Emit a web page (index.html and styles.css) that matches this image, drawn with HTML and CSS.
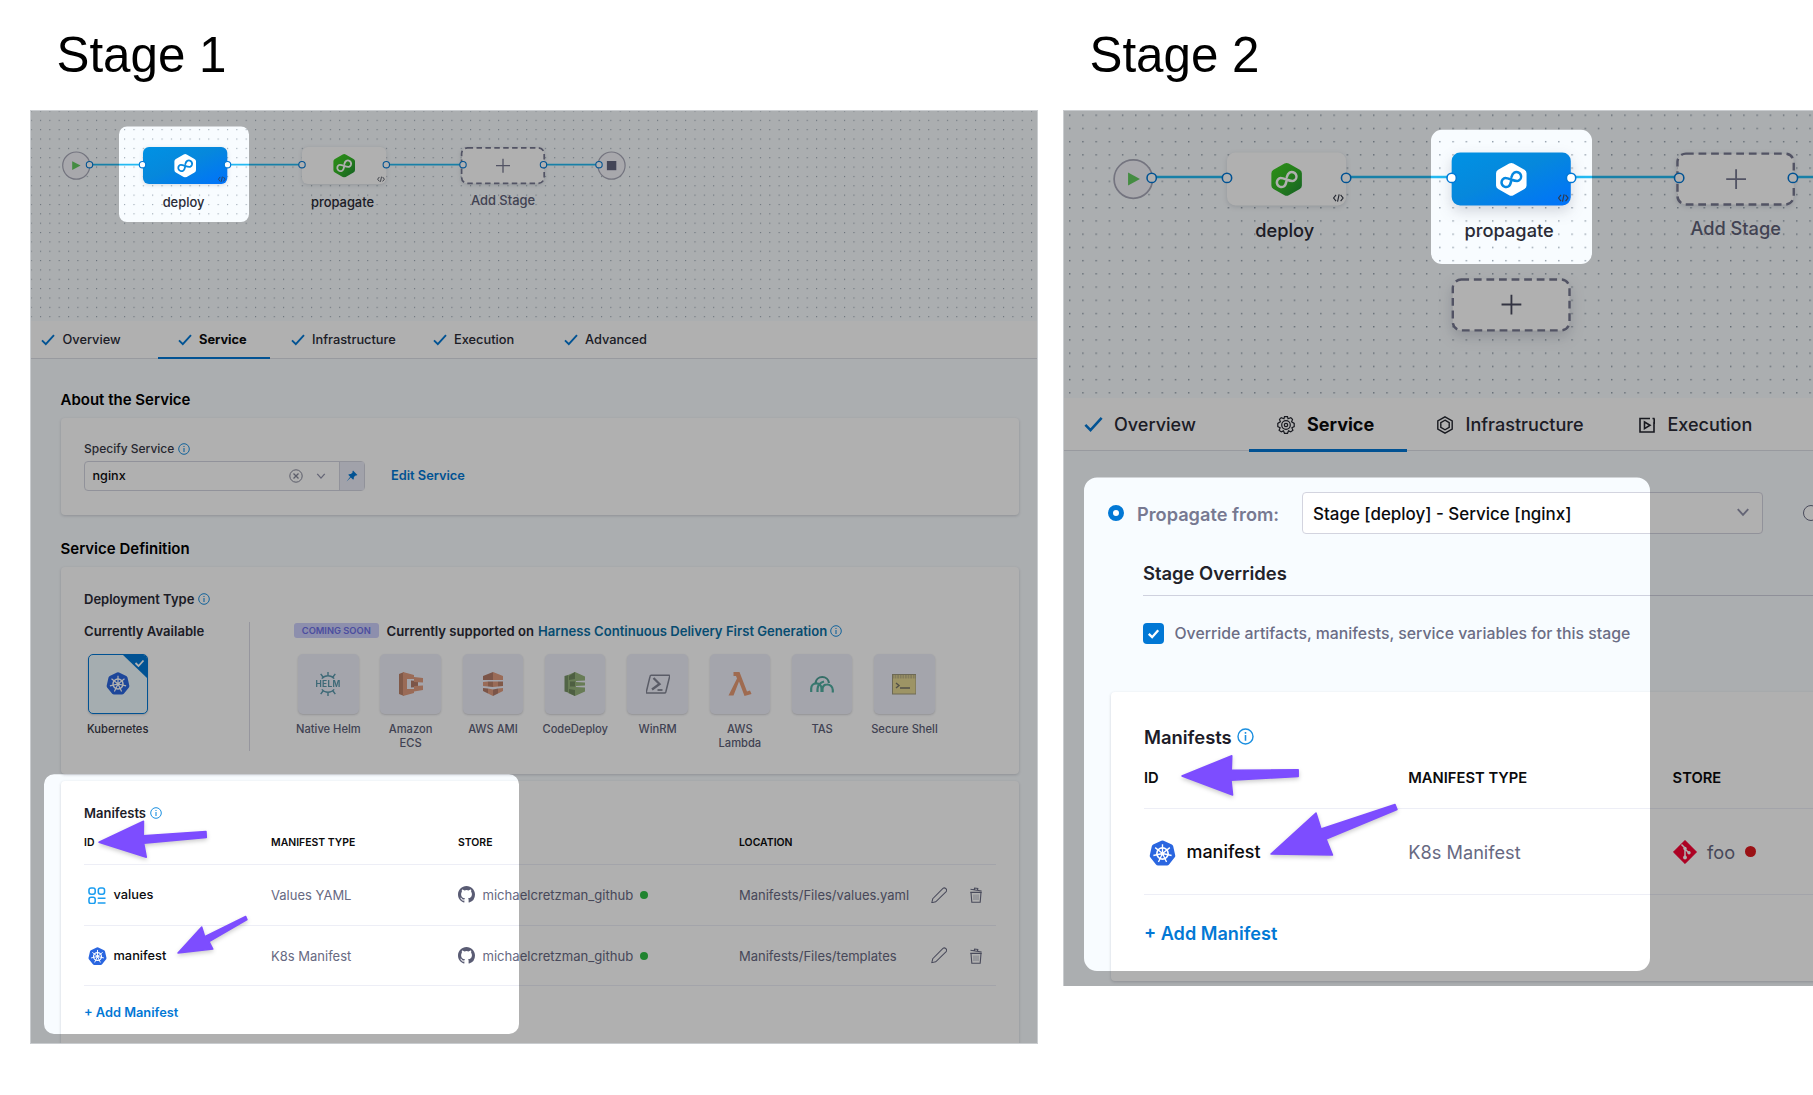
FILE: index.html
```
<!DOCTYPE html>
<html lang="en">
<head>
<meta charset="utf-8">
<title>Propagate a service between stages</title>
<link rel="stylesheet" href="styles.css">
</head>
<body>
<svg class="defs" width="0" height="0" aria-hidden="true">
  <defs>
    <linearGradient id="blue" x1="0" y1="0" x2="1" y2="1"><stop offset="0" stop-color="#0092e4"/><stop offset=".45" stop-color="#0688dc"/><stop offset="1" stop-color="#0072fb"/></linearGradient>
    <linearGradient id="green" x1="0" y1="0" x2="1" y2="1"><stop offset="0" stop-color="#42d022"/><stop offset=".5" stop-color="#35b828"/><stop offset="1" stop-color="#1f8a35"/></linearGradient>
    <pattern id="dots1" patternUnits="userSpaceOnUse" x="30.6" y="119.8" width="9.35" height="9.35"><rect width="1.1" height="1.1" fill="#96a3af"/></pattern>
    <pattern id="dots2" patternUnits="userSpaceOnUse" x="1069" y="114.5" width="13.22" height="13.22"><rect width="1.4" height="1.4" fill="#8f9ca8"/></pattern>
    <symbol id="hex" viewBox="-12 -12 24 24"><path d="M-1.5-11.2Q0-12 1.5-11.2L9.3-6.8Q10.8-6 10.8-4.4V4.4Q10.8 6 9.3 6.8L1.5 11.2Q0 12-1.5 11.2L-9.3 6.8Q-10.8 6-10.8 4.4V-4.4Q-10.8-6-9.3-6.8z"/><path d="M-.9 1.3C-2.2 2.9-3 3.5-4.2 3.5a3.3 3.3 0 0 1 0-6.6C-1.6-3.100 1.300 3.300 4.100 3.300a3.300 3.300 0 0 0 0-6.600C2.800-3.300 2-2.600.9-1.400" transform="rotate(-28)" fill="none" stroke="var(--loop)" stroke-width="1.8" stroke-linecap="round"/></symbol>
    <symbol id="code" viewBox="0 0 10 8"><path d="M3 1.2.8 4 3 6.8M7 1.2 9.2 4 7 6.8M5.7.8 4.3 7.2" fill="none" stroke="#333846" stroke-width="1"/></symbol>
    <symbol id="check" viewBox="0 0 14 14"><path d="M1 7.3 4.8 11.1 13 2.1" fill="none" stroke="#0278d5" stroke-width="1.9"/></symbol>
    <symbol id="info" viewBox="0 0 12 12"><circle cx="6" cy="6" r="5.3" fill="none" stroke="#1b8fe0" stroke-width="1"/><path d="M6 5v4M6 2.9v1.2" stroke="#1b8fe0" stroke-width="1.1"/></symbol>
    <symbol id="k8s" viewBox="-12 -12 24 24"><path d="M-1-11.4Q0-11.9 1-11.4L8.3-7.9Q9.2-7.4 9.5-6.4L11.3 1.5Q11.5 2.6 10.9 3.4L5.8 9.8Q5.1 10.6 4 10.6H-4Q-5.1 10.6-5.8 9.8L-10.9 3.4Q-11.5 2.6-11.3 1.5L-9.5-6.4Q-9.2-7.4-8.3-7.9z" fill="#2a66e0"/><g fill="none" stroke="#fff"><circle r="5" stroke-width="1.5"/><g stroke-width="1.2"><path d="M0-8.3V0L6.5-5.2M0 0 8.1 1.8M0 0 3.6 7.5M0 0-3.6 7.5M0 0-8.1 1.8M0 0-6.5-5.2"/></g></g><circle r="1.5" fill="#fff"/></symbol>
    <symbol id="github" viewBox="0 0 16 16"><path fill="#5a5c74" d="M8 0C3.58 0 0 3.58 0 8c0 3.54 2.29 6.53 5.47 7.59.4.07.55-.17.55-.38 0-.19-.01-.82-.01-1.49-2.01.37-2.53-.49-2.69-.94-.09-.23-.48-.94-.82-1.13-.28-.15-.68-.52-.01-.53.63-.01 1.08.58 1.23.82.72 1.21 1.87.87 2.33.66.07-.52.28-.87.51-1.07-1.78-.2-3.64-.89-3.64-3.95 0-.87.31-1.59.82-2.15-.08-.2-.36-1.02.08-2.12 0 0 .67-.21 2.2.82a7.5 7.5 0 0 1 4 0c1.53-1.04 2.2-.82 2.2-.82.44 1.1.16 1.92.08 2.12.51.56.82 1.27.82 2.15 0 3.07-1.87 3.75-3.65 3.95.29.25.54.73.54 1.48 0 1.07-.01 1.93-.01 2.2 0 .21.15.46.55.38A8.01 8.01 0 0 0 16 8c0-4.42-3.58-8-8-8z"/></symbol>
    <symbol id="pencil" viewBox="0 0 16 16"><path d="M.8 15.2 1.7 11.4 11.6 1.3Q13 .2 14.4 1.6 15.8 3 14.7 4.4L4.6 14.3Z" fill="none" stroke="#6b6d85" stroke-width="1"/></symbol>
    <symbol id="trash" viewBox="0 0 14 16"><path d="M1.5 2.2 12.6 4M5.2 2.6 5.6 1 8.8 1.5 8.6 3M2 5.4H12L11.2 15.2H2.8zM1.2 5.4H12.8" fill="none" stroke="#6b6d85" stroke-width="1.1"/><path d="M5 7.5v5.5M7 7.5v5.5M9 7.5v5.5" stroke="#a3a6b8" stroke-width=".8"/></symbol>
    <symbol id="chev" viewBox="0 0 12 12"><path d="M1.5 3.5 6 8.5 10.5 3.5" fill="none" stroke="#9293ab" stroke-width="1.6"/></symbol>
  </defs>
</svg>

<main class="stages">
  <section class="stage stage-one">
    <h1>Stage 1</h1>
    <div class="panel">
      <svg class="canvas" viewBox="31 111 1006 210" width="1006" height="210">
        <rect x="31" y="111" width="1006" height="210" fill="url(#dots1)"/>
        <g transform="translate(143 147)">
          <path class="link" d="M-53 17.7H0M84 17.7H159M243 17.7H320M400 17.7H456"/>
          <circle class="terminal" cx="-66.7" cy="18.6" r="13.6"/><path d="M-70.8 14.2 -62.4 18.6-70.8 23z" fill="#63cb5f"/>
          <circle class="terminal" cx="468.5" cy="18.6" r="13.6"/><rect x="463.9" y="14" width="9.4" height="9.2" fill="#62647e"/>
          <rect class="node selected" width="84.3" height="37" rx="6"/>
          <use class="hex-white" href="#hex" x="30.2" y="6.7" width="24" height="24"/><use href="#code" x="74.8" y="29" width="8" height="6.4"/>
          <rect class="node" x="159" width="84.3" height="37" rx="6"/>
          <use class="hex-green" href="#hex" x="189.2" y="6.7" width="24" height="24"/><use href="#code" x="234" y="29" width="8" height="6.4"/>
          <rect class="node add" x="318.6" y=".8" width="82.6" height="35.6" rx="6"/><path class="plus" d="M353 18.7H367M360 11.7V25.7"/>
          <g class="port"><circle cx="-53.5" cy="17.7" r="3.2"/><circle cx="-.5" cy="17.7" r="3.2"/><circle cx="84.5" cy="17.7" r="3.2"/><circle cx="159" cy="17.7" r="3.2"/><circle cx="243.3" cy="17.7" r="3.2"/><circle cx="320" cy="17.7" r="3.2"/><circle cx="400.5" cy="17.7" r="3.2"/><circle cx="456" cy="17.7" r="3.2"/></g>
          <text x="40.5" y="59.6">deploy</text><text x="199.5" y="59.6">propagate</text><text class="muted" x="360" y="57.7">Add Stage</text>
        </g>
      </svg>
      <nav class="tabs">
        <a><svg><use href="#check"/></svg>Overview</a>
        <a class="active"><svg><use href="#check"/></svg>Service</a>
        <a><svg><use href="#check"/></svg>Infrastructure</a>
        <a><svg><use href="#check"/></svg>Execution</a>
        <a><svg><use href="#check"/></svg>Advanced</a>
      </nav>
      <div class="body">
        <h2>About the Service</h2>
        <div class="card about">
          <div class="label">Specify Service <svg class="info"><use href="#info"/></svg></div>
          <div class="field-row">
            <div class="select">
              <span>nginx</span>
              <svg class="clear" viewBox="0 0 14 14"><circle cx="7" cy="7" r="6.2" fill="none" stroke="#85879a"/><path d="M4.5 4.5 9.5 9.5M9.5 4.5 4.5 9.5" stroke="#85879a" stroke-width="1.3"/></svg>
              <svg class="chev"><use href="#chev"/></svg>
              <span class="pin"><svg viewBox="0 0 12 12"><path d="M7 .6 11.4 5 10.2 5.6 9.6 5.4 7.9 7.1Q8.2 8.6 7.2 9.8L4.8 7.4.6 11.4 4.2 6.8 2.2 4.8Q3.4 3.8 4.9 4.1L6.6 2.4 6.4 1.8z" fill="#0278d5"/></svg></span>
            </div>
            <a class="link-text">Edit Service</a>
          </div>
        </div>
        <h2 class="second">Service Definition</h2>
        <div class="card definition">
          <div class="label strong">Deployment Type <svg class="info"><use href="#info"/></svg></div>
          <div class="types">
            <div class="available">
              <h3>Currently Available</h3>
              <div class="type"><div class="tile chosen"><svg viewBox="0 0 24 24"><use href="#k8s" width="24" height="24"/></svg><svg class="corner" viewBox="0 0 24 23"><path d="M0 0H24V23z" fill="#0278d5"/><path d="M12.5 8 15.5 11 20.5 5.5" fill="none" stroke="#fff" stroke-width="1.8"/></svg></div><span>Kubernetes</span></div>
            </div>
            <div class="upcoming">
              <h3><span class="badge">COMING SOON</span>Currently supported on <a>Harness Continuous Delivery First Generation</a><svg class="info"><use href="#info"/></svg></h3>
              <div class="tiles">
                <div class="type"><div class="tile"><svg viewBox="-12 -12 24 24"><g fill="none" stroke="#3a879c" stroke-width="1.4"><path d="M-6.2-5.400A8.200 8.200 0 0 1 6.200-5.400M-6.200 5.400A8.200 8.200 0 0 0 6.200 5.400M0-8.200V-12M0 8.200V12M-5-7-7.300-10.200M5-7 7.300-10.200M-5 7-7.300 10.200M5 7 7.300 10.200"/></g><text class="helm" x="0" y="2.9">HELM</text></svg></div><span>Native Helm</span></div>
                <div class="type"><div class="tile"><svg viewBox="0 0 24 24"><path d="M0 2 5 0V24L0 22z" fill="#b0694a"/><path d="M4 0 15 3V7H8V17H15V21L4 24z" fill="#dc8a63"/><path d="M12 8.500 19 9V15L12 15.500z" fill="#a8644a"/><path d="M15 5 24 6V10.500L15 10zM15 14 24 13.500V18L15 19.500z" fill="#dc8a63"/></svg></div><span>Amazon ECS</span></div>
                <div class="type"><div class="tile"><svg viewBox="0 0 24 24"><path d="M2 4 12 0V8L2 8z" fill="#a8644a"/><path d="M22 4 12 0V8L22 8zM2 10 7 9.500V14.500L2 14z" fill="#dc8a63"/><path d="M7 9.500H12V15L7 14.500zM17 9.500H22V14L17 14.500z" fill="#b0694a"/><path d="M12 9.500H17V14.500L12 15zM7 16.500 12 17.500V24L7 21.500zM17 16.500 22 16V19L17 21.500z" fill="#dc8a63"/><path d="M2 16 7 16.500V21.500L2 19zM12 17.500 17 16.500V21.500L12 24z" fill="#a8644a"/></svg></div><span>AWS AMI</span></div>
                <div class="type"><div class="tile"><svg viewBox="0 0 24 24"><path d="M1.500 4 5 3V20.500L1.500 19.500z" fill="#5f8048"/><path d="M5 3 12 0 22 4.500V8.500L13 9V10L22 10.500V13.500L13 14V15L22 15.500V19.500L12 24 5 21z" fill="#84a862"/><path d="M6 4 12 0V7L6 8zM7 9.500H12V14.500H7zM6 17 12 18V24L6 21z" fill="#56743f"/></svg></div><span>CodeDeploy</span></div>
                <div class="type"><div class="tile"><svg viewBox="0 0 24 24"><path d="M5.200 3.200H23Q24 3.200 23.700 4.300L19.800 20Q19.500 21 18.500 21H1Q0 21 .3 20L4.100 4.200Q4.300 3.200 5.200 3.200z" fill="none" stroke="#6c707f" stroke-width="1.500"/><path d="M7.500 6 13.500 12 6 17.500" fill="none" stroke="#6c707f" stroke-width="2.300"/><path d="M11.500 18H16.500" stroke="#6c707f" stroke-width="1.800"/></svg></div><span>WinRM</span></div>
                <div class="type"><div class="tile"><svg viewBox="0 0 24 24"><path d="M5.500 0H11.500L19 19.500 22 18.500 23.500 22 16.500 24 11 9.500 5.500 23.500H.5L9 6.500 8 4H5.500z" fill="#e58a58"/></svg></div><span>AWS Lambda</span></div>
                <div class="type"><div class="tile"><svg viewBox="0 0 24 24"><g fill="none" stroke="#2fa08e" stroke-width="2.200"><path d="M1.200 20V16.500A5 5 0 0 1 11.500 16.500V20M7.500 20V17Q8 11 14 9.500M12.500 20V17Q13 12.500 17 12.500A5.500 5.500 0 0 1 22.800 18V20.500"/><path d="M5.500 11A6.800 6.800 0 0 1 19 11" stroke="#2a8f80"/></g></svg></div><span>TAS</span></div>
                <div class="type"><div class="tile"><svg viewBox="0 0 24 24"><rect x=".5" y="2.500" width="23.500" height="19.500" fill="#e3d27d" stroke="#8e8761"/><path d="M0 4.500H24" stroke="#8e8761" stroke-width="4" stroke-dasharray="1.800 .8" opacity=".55"/><path d="M4 11 7 13.500 4 16M8 16H18" fill="none" stroke="#5d5a4a" stroke-width="1.400"/></svg></div><span>Secure Shell</span></div>
              </div>
            </div>
          </div>
        </div>
        <div class="card manifests">
          <div class="label title">Manifests <svg class="info"><use href="#info"/></svg></div>
          <div class="row head"><span>ID</span><span>MANIFEST TYPE</span><span>STORE</span><span>LOCATION</span></div>
          <div class="row"><span class="id"><svg viewBox="0 0 18 18"><g fill="none" stroke="#1a9df0" stroke-width="1.600"><rect x="1" y="1" width="6.400" height="6.400" rx="2.200"/><rect x="10.600" y="1" width="6.400" height="6.400" rx="2.200"/><rect x="1" y="10.600" width="6.400" height="6.400" rx="2.200"/><path d="M10 11.500H18M10 16.500H18"/></g></svg>values</span><span>Values YAML</span><span class="store"><svg><use href="#github"/></svg>michaelcretzman_github<i class="status ok"></i></span><span>Manifests/Files/values.yaml</span><svg class="pencil"><use href="#pencil"/></svg><svg class="trash"><use href="#trash"/></svg></div>
          <div class="row"><span class="id"><svg class="wheel"><use href="#k8s"/></svg>manifest</span><span>K8s Manifest</span><span class="store"><svg><use href="#github"/></svg>michaelcretzman_github<i class="status ok"></i></span><span>Manifests/Files/templates</span><svg class="pencil"><use href="#pencil"/></svg><svg class="trash"><use href="#trash"/></svg></div>
          <a class="link-text add-link">+ Add Manifest</a>
        </div>
      </div>
      <svg class="spotlight" viewBox="31 111 1006 932">
        <path class="dim" d="M31 111H1037V1043H31zM127 126.500H241A8 8 0 0 1 249 134.500V214A8 8 0 0 1 241 222H127A8 8 0 0 1 119 214V134.500A8 8 0 0 1 127 126.500zM54 774.300H509A10 10 0 0 1 519 784.300V1024A10 10 0 0 1 509 1034H54A10 10 0 0 1 44 1024V784.300A10 10 0 0 1 54 774.300z"/>
        <path class="arrow" d="M99 842.300 143.500 821.300 143.300 835.700 206 831.500 206.300 837.500 143.700 843.300 146.300 857.200z"/>
        <path class="arrow" d="M178 953 201.700 927 204.700 936.700 245.700 916.500 247 919.700 209 941.700 212.800 949z"/>
      </svg>
    </div>
  </section>

  <section class="stage stage-two">
    <h1>Stage 2</h1>
    <div class="panel">
      <svg class="canvas" viewBox="1064 111 760 287" width="760" height="287">
        <rect x="1064" y="111" width="760" height="287" fill="url(#dots2)"/>
        <g transform="translate(1227 152.500) scale(1.413)">
          <path class="link" d="M-53 17.300H0M84 17.300H159M243 17.300H320M400 17.300H456"/>
          <circle class="terminal" cx="-66.300" cy="18.800" r="13.600"/><path d="M-70 14.200-61.600 18.800-70 23.400z" fill="#63cb5f"/>
          <rect class="node" width="84.300" height="37.500" rx="6"/>
          <use class="hex-green" href="#hex" x="30.200" y="7" width="24" height="24"/><use href="#code" x="74.800" y="29" width="8" height="6.400"/>
          <rect class="node selected big" x="159" width="84.300" height="37.500" rx="6"/>
          <use class="hex-white" href="#hex" x="189.200" y="7" width="24" height="24"/><use href="#code" x="234" y="29" width="8" height="6.400"/>
          <rect class="node add" x="318.800" y=".8" width="82.300" height="36" rx="6"/><path class="plus" d="M353.300 18.900H367.300M360.300 11.900V25.900"/>
          <rect class="node add big" x="159.800" y="89.900" width="82.600" height="36" rx="6"/><path class="plus strong" d="M194.300 107.600H208.300M201.300 100.600V114.600"/>
          <g class="port"><circle cx="-53.300" cy="18" r="3.300"/><circle cx="0" cy="18" r="3.300"/><circle cx="84.300" cy="18" r="3.300"/><circle cx="159" cy="18" r="3.300"/><circle cx="243.500" cy="18" r="3.300"/><circle cx="320" cy="18" r="3.300"/><circle cx="400.500" cy="18" r="3.300"/></g>
          <text x="40.800" y="60">deploy</text><text x="199.700" y="60">propagate</text><text class="muted" x="360" y="58.400">Add Stage</text>
        </g>
      </svg>
      <nav class="tabs">
        <a><svg><use href="#check"/></svg>Overview</a>
        <a class="active"><svg viewBox="-9 -9 18 18"><g fill="none" stroke="#23252e" stroke-width="1.200"><path d="M-1.500-8.300H1.500L2-6.300 4.800-7.400 6.500-5.600 5.600-3.300 8.200-1.600V1.600L5.900 2.700 6.900 5.300 4.700 6.900 2.500 5.900 1.500 8.300H-1.500L-2.500 5.900-4.700 6.900-6.900 5.300-5.900 2.700-8.200 1.600V-1.600L-5.600-3.300-6.500-5.600-4.800-7.400-2-6.300z"/><circle r="4.300"/><circle r="1.700"/></g></svg>Service</a>
        <a><svg viewBox="-9 -9 18 18"><g fill="none" stroke="#23252e" stroke-width="1.400"><path d="M0-8.200 7.200-4.200V4.200L0 8.200-7.200 4.200V-4.200z"/><path d="M0-4.800 4.200-2.400V2.400L0 4.800-4.200 2.400V-2.400z"/></g></svg>Infrastructure</a>
        <a><svg viewBox="0 0 18 18"><g fill="none" stroke="#23252e" stroke-width="1.600"><path d="M16 6V16H2V2.500H12M14.500 2.500H16.500M16.200 8V2.500"/><path d="M6.500 6 12 9.300 6.500 12.600z"/></g></svg>Execution</a>
      </nav>
      <div class="body">
        <div class="source-row"><i class="radio on"></i><span class="source-label">Propagate from:</span><div class="select"><span>Stage [deploy] - Service [nginx]</span><svg class="chev"><use href="#chev"/></svg></div><i class="radio"></i></div>
        <h3 class="overrides">Stage Overrides</h3>
        <div class="override-check"><i class="checkbox"><svg viewBox="0 0 20 20"><path d="M5.500 10.300 8.700 13.500 14.500 6.800" fill="none" stroke="#fff" stroke-width="2.200"/></svg></i><span>Override artifacts, manifests, service variables for this stage</span></div>
        <div class="card manifests">
          <div class="label title">Manifests <svg class="info"><use href="#info"/></svg></div>
          <div class="row head"><span>ID</span><span>MANIFEST TYPE</span><span>STORE</span></div>
          <div class="row"><span class="id"><svg class="wheel"><use href="#k8s"/></svg>manifest</span><span>K8s Manifest</span><span class="store"><svg viewBox="0 0 24 24"><path d="M12 .3 23.700 12 12 23.700.3 12z" fill="#fb0234" stroke="#fb0234" stroke-width=".6" stroke-linejoin="round"/><path d="M8.500 4.500 12 8V17.500M12 9 16 13" fill="none" stroke="#fff" stroke-width="1.500"/><circle cx="12" cy="17.500" r="1.900" fill="#fff"/><circle cx="12" cy="8.500" r="1.700" fill="#fff"/><circle cx="16" cy="12.800" r="1.700" fill="#fff"/></svg>foo<i class="status bad"></i></span></div>
          <a class="link-text add-link">+ Add Manifest</a>
        </div>
      </div>
      <svg class="spotlight" viewBox="1064 111 760 875">
        <path class="dim" d="M1064 111H1824V986H1064zM1442 129.700H1581A11 11 0 0 1 1592 140.700V253A11 11 0 0 1 1581 264H1442A11 11 0 0 1 1431 253V140.700A11 11 0 0 1 1442 129.700zM1097 477.500H1637A13 13 0 0 1 1650 490.500V958A13 13 0 0 1 1637 971H1097A13 13 0 0 1 1084 958V490.500A13 13 0 0 1 1097 477.500z"/>
        <path class="arrow" d="M1182 776 1231.800 755.700 1231.300 770.200 1298.200 769.800V776.500L1231 780.200 1232.600 795z"/>
        <path class="arrow" d="M1271 854 1316 813 1321 829 1395 804.500 1397 809.500 1326 839 1332.500 855z"/>
      </svg>
    </div>
  </section>
</main>
</body>
</html>
```
FILE: styles.css
```
* { box-sizing: border-box; }
body { margin: 0; background: #fff; overflow: hidden; font-family: Inter, "Liberation Sans", sans-serif; color: #1c1c28; }
h1, h2, h3 { margin: 0; }
svg { display: block; flex: none; }
i { display: block; flex: none; }
.defs { position: absolute; }

.stages { display: flex; width: 1813px; height: 1095px; overflow: hidden; }
.stage { flex: none; }
.stage h1 { height: 110px; font: 400 49.3px/110px "Liberation Sans", Arial, sans-serif; color: #000; }
.stage-one { margin-left: 30px; width: 1008px; }
.stage-two { margin-left: 25px; width: 762px; }
.stage-one h1 { padding-left: 26.5px; }
.stage-two h1 { padding-left: 26.5px; }

.panel { position: relative; overflow: hidden; border: 1px solid #c9cccf; background: #f8fcff; }
.stage-one .panel { height: 934px; font-size: 13px; line-height: 16px; }
.stage-two .panel { height: 876px; border-bottom: 0; font-size: 18.2px; line-height: 20px; }

/* pipeline canvas */
.canvas text { font-size: 12.9px; font-weight: 500; text-anchor: middle; fill: #2a2b36; }
.canvas text.muted { fill: #5f6178; }
.link { fill: none; stroke: #24baf2; stroke-width: 1.7; }
.terminal { fill: #f3f3fa; stroke: #a8a9b8; stroke-width: 1.2; }
.node { fill: #fff; filter: drop-shadow(0 1px 2px rgba(40, 41, 61, .16)); }
.node.selected { fill: url(#blue); }
.node.big { filter: drop-shadow(0 4px 5px rgba(40, 41, 61, .18)); }
.node.add { stroke: #777991; stroke-width: 1.7; stroke-dasharray: 5.5 3.4; }
.plus { stroke: #777991; stroke-width: 1.3; }
.plus.strong { stroke: #4a4c60; }
.port circle { fill: #fff; stroke: #0278d5; stroke-width: 1.1; }
.hex-white { fill: #fff; --loop: #0688e0; }
.hex-green { fill: url(#green); --loop: #fff; }

/* tabs */
.tabs { display: grid; background: #fff; border-bottom: 1px solid #dcdfe6; font-weight: 500; color: #2a2b36; }
.tabs a { display: flex; align-items: center; white-space: nowrap; position: relative; }
.tabs .active { font-weight: 700; color: #0b0b0d; }
.tabs .active::after { content: ""; position: absolute; left: 0; right: 0; bottom: -1px; height: 2px; background: #0278d5; }
.stage-one .tabs { height: 38px; grid-template-columns: 127px 112px 143px 131px 1fr; font-size: 12.8px; }
.stage-one .tabs a { padding-left: 19.5px; gap: 7.5px; }
.stage-one .tabs a:nth-child(3) { padding-left: 20.5px; }
.stage-one .tabs a:first-child { padding-left: 10px; }
.stage-one .tabs svg { width: 14px; height: 14px; }
.stage-two .tabs { height: 53px; grid-template-columns: 184.5px 158.5px 202px 1fr; font-size: 18.05px; }
.stage-two .tabs a { padding: 1.5px 0 0 28.5px; gap: 12px; }
.stage-two .tabs a:first-child { padding-left: 20px; gap: 11px; }
.stage-two .tabs svg { width: 18px; height: 18px; }
.stage-two .tabs a:first-child svg { width: 19px; height: 19px; }
.stage-two .tabs .active::after { height: 3px; bottom: -2px; }

/* shared pieces */
.card { background: #fff; border-radius: 4px; box-shadow: 0 1px 3px rgba(40, 41, 61, .2); }
.label { display: flex; align-items: center; }
.info { width: 12px; height: 12px; }
.label .info { margin-left: 3.5px; }
.link-text { color: #0278d5; font-weight: 600; }
.select { display: flex; align-items: center; background: #fff; border: 1px solid #d3d4df; border-radius: 4px; color: #0b0b0d; }
.title { font-weight: 600; }
.row { display: grid; align-items: center; border-bottom: 1px solid #edeef6; color: #676982; white-space: nowrap; }
.row.head { font-weight: 600; color: #0b0b0d; }
.id, .store { display: flex; align-items: center; }
.id { color: #0b0b0d; font-weight: 500; }
.status { border-radius: 50%; }
.ok { background: #2fbe45; }
.bad { background: #e0191f; }
.add-link { display: block; }

/* stage one body */
.stage-one .body { padding: 30.5px 18px 0 29.5px; }
.body h2 { font-size: 15px; line-height: 20px; font-weight: 600; color: #000; margin-bottom: 8px; }
.body h2.second { margin-top: 24px; margin-bottom: 8.5px; }
.about { height: 97px; padding: 23px 23.5px; }
.about .label { font-size: 12px; font-weight: 500; color: #383946; }
.field-row { display: flex; align-items: center; margin-top: 4.5px; }
.field-row .select { width: 281px; height: 29.5px; padding-left: 7.5px; font-size: 12.6px; font-weight: 500; }
.select > span:first-child { padding-top: 1px; }
.clear { width: 14px; height: 14px; margin-left: auto; }
.field-row .chev { width: 10px; height: 10px; margin-left: 13px; }
.pin { display: flex; align-items: center; justify-content: center; width: 25.5px; align-self: stretch; margin-left: 12.5px; background: #e9ebf7; border-left: 1px solid #d3d4df; }
.pin svg { width: 12px; height: 12px; }
.field-row .link-text { margin-left: 26px; font-size: 12.8px; }
.definition { height: 207px; padding: 24px 23.5px 0; }
.definition .label { font-weight: 600; color: #2a2b36; }
.types { display: flex; height: 129px; margin-top: 15px; }
.types h3 { display: flex; align-items: center; height: 16px; padding-top: 1px; font-size: 13.1px; font-weight: 600; white-space: nowrap; color: #2a2b36; }
.types h3 a { color: #0b6fa4; margin-left: 4px; }
.types h3 .info { margin-left: 3px; }
.available { width: 166px; border-right: 1px solid #d9dae5; }
.available .type { width: 67.5px; }
.upcoming { padding-left: 44px; }
.badge { width: 84.5px; height: 15px; margin: -1px 8px 0 0; border-radius: 3px; background: #cdcffb; color: #6e71e6; font-size: 9.3px; line-height: 15px; text-align: center; }
.tiles { display: grid; grid-template-columns: repeat(8, 82.3px); margin-left: -6.8px; }
.type { display: flex; flex-direction: column; align-items: center; margin-top: 16px; }
.type span { margin-top: 8px; max-width: 72px; font-size: 11.15px; line-height: 14px; font-weight: 500; text-align: center; color: #5d5f78; }
.tiles .type:nth-child(2) span, .tiles .type:nth-child(6) span { width: 50px; }
.tile { position: relative; display: flex; align-items: center; justify-content: center; width: 60.5px; height: 60px; border-radius: 5px; background: #eeeffa; box-shadow: 0 1px 2px rgba(40, 41, 61, .2); }
.tile svg { width: 24px; height: 24px; }
.tiles .tile svg { opacity: .82; }
.available .type span { color: #383946; }
.tile.chosen { width: 60px; background: #effbff; border: 1px solid #0278d5; overflow: hidden; }
.tile .corner { position: absolute; top: 0; right: 0; width: 24px; height: 23px; }
.helm { font-size: 8.4px; font-weight: 700; text-anchor: middle; letter-spacing: .3px; fill: #3a879c; }
.stage-one .manifests { height: 280px; margin-top: 7px; padding: 24px 23.5px 0; }
.stage-one .row { grid-template-columns: 187px 187px 281px 191.5px 38.5px 1fr; height: 60.7px; }
.stage-one .head { height: 44px; font-size: 10.45px; }
.stage-one .id { padding-left: 4px; font-size: 12.8px; }
.stage-one .id svg { width: 17.5px; height: 17.5px; margin: 1px 8px 0 0; }
.stage-one .id .wheel { width: 19px; height: 19px; margin: 2px 7px 0 -.5px; }
.stage-one .store { font-size: 13.08px; }
.stage-one .store svg { width: 17px; height: 17px; margin-right: 7.5px; }
.stage-one .status { width: 8px; height: 8px; margin-left: 7px; }
.pencil { width: 16.5px; height: 16.5px; }
.trash { width: 14px; height: 16px; }
.stage-one .add-link { margin-top: 18.5px; font-size: 12.8px; }

/* stage two body */
.stage-two .body { padding: 41px 0 0 44px; }
.source-row { display: flex; align-items: center; height: 42px; white-space: nowrap; }
.radio { width: 16px; height: 16px; border: 1.5px solid #6b6d85; border-radius: 50%; background: #fff; }
.radio.on { border: 5.5px solid #0278d5; }
.source-label { width: 164.5px; margin-left: 13px; padding-top: 1px; font-size: 18.2px; font-weight: 600; color: #777991; }
.source-row .select { width: 461px; height: 42px; padding: 0 12px 0 10.5px; font-size: 16.95px; font-weight: 500; }
.source-row .select > span:first-child { padding-top: 1.5px; }
.source-row .chev { width: 14px; height: 14px; margin: -2px 0 0 auto; }
.source-row .select + .radio { margin-left: 40px; }
.overrides { margin: 26.5px 0 0 35px; padding-bottom: 10.5px; border-bottom: 1px solid #cfd1de; font-size: 18.4px; line-height: 24px; font-weight: 600; color: #22222a; }
.override-check { display: flex; align-items: center; height: 21px; margin: 26.5px 0 48px 35px; font-size: 15.82px; font-weight: 500; color: #6b6d85; white-space: nowrap; }
.override-check span { padding-top: 1px; }
.checkbox { width: 21px; height: 21px; margin-right: 10.5px; border-radius: 4px; background: #0278d5; }
.stage-two .manifests { height: 289.5px; margin-left: 3px; padding: 35px 0 0 33px; }
.stage-two .title { font-size: 18.4px; }
.stage-two .label .info { width: 17px; height: 17px; margin: -1px 0 0 5.5px; }
.stage-two .row { grid-template-columns: 264.3px 264.3px 1fr; height: 86px; }
.stage-two .head { height: 62.5px; padding-top: 1.5px; font-size: 14.73px; }
.stage-two .id { padding-left: 5px; font-size: 17.95px; }
.stage-two .id svg { width: 27px; height: 27px; margin: 3px 10.5px 0 0; }
.stage-two .store svg { width: 24px; height: 24px; margin-right: 10.5px; }
.stage-two .status { width: 11px; height: 11px; margin-left: 10px; }
.stage-two .add-link { margin-top: 28px; font-size: 18.1px; }

/* dimming with cut-outs, and the callout arrows */
.spotlight { position: absolute; inset: 0; width: 100%; height: 100%; }
.dim { fill: #000; fill-opacity: .31; fill-rule: evenodd; }
.arrow { fill: #7d4dff; stroke: #7d4dff; stroke-width: 1.5; stroke-linejoin: round; filter: drop-shadow(0 2px 2px rgba(0, 0, 0, .2)); }
```
